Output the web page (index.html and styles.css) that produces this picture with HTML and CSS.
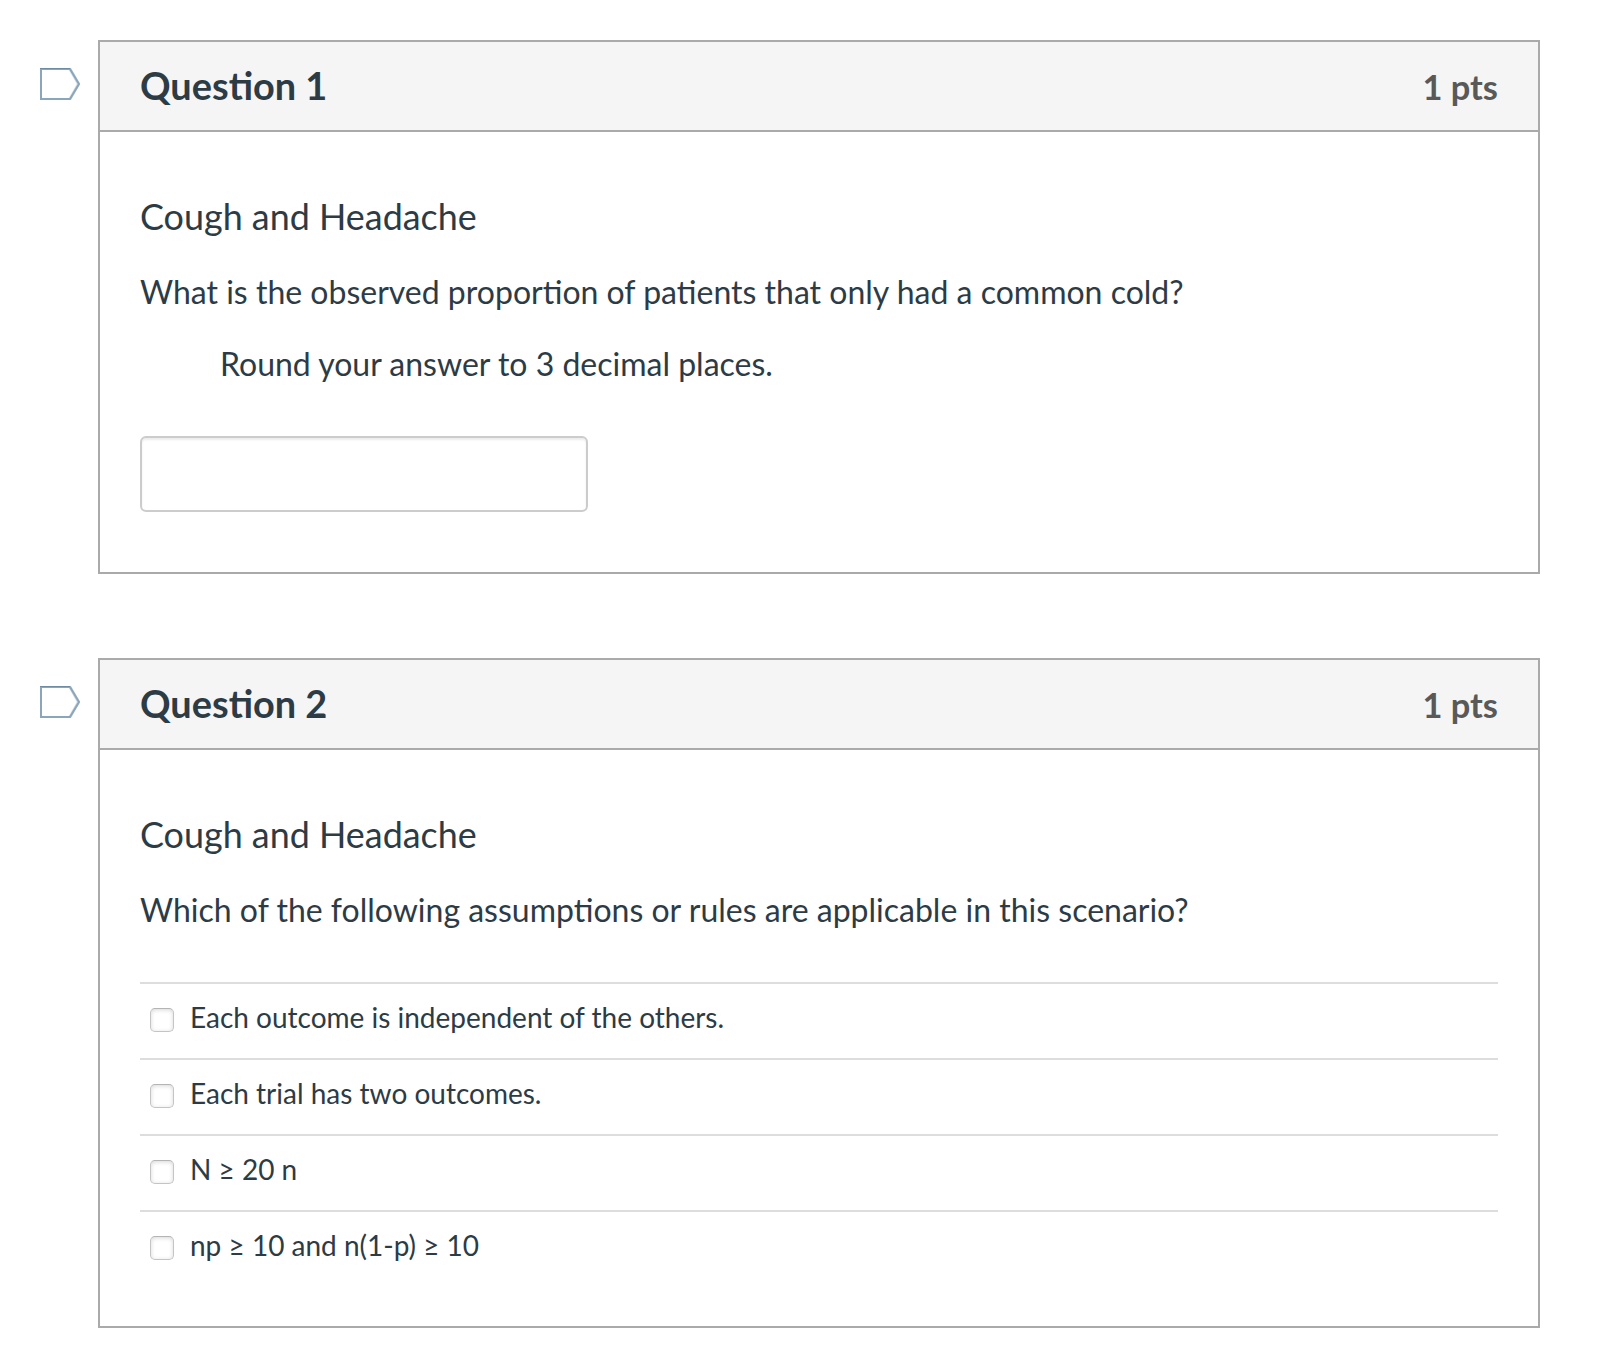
FILE: index.html
```
<!DOCTYPE html>
<html lang="en">
<head>
  <meta charset="UTF-8">
  <meta name="viewport" content="width=device-width, initial-scale=1.0">
  <title>Quiz</title>
  <link rel="stylesheet" href="styles.css">
</head>
<body>
  <div class="question_holder">
    <a href="#" class="flag" aria-label="Flag question">
      <svg width="40" height="32" viewBox="0 0 40 32"><path d="M1 1H30L39 16L30 31H1Z"/><path class="slope" d="M30 1L38.5 16L30 31"/><path class="edge" d="M0 .5H30"/></svg>
    </a>
    <div class="question">
      <div class="header">
        <h2 class="name">Question 1</h2>
        <span class="points">1 pts</span>
      </div>
      <div class="text">
        <h3>Cough and Headache</h3>
        <p>What is the observed proportion of patients that only had a common cold?</p>
        <p class="indent">Round your answer to 3 decimal places.</p>
        <input type="text" class="question_input">
      </div>
    </div>
  </div>

  <div class="question_holder">
    <a href="#" class="flag" aria-label="Flag question">
      <svg width="40" height="32" viewBox="0 0 40 32"><path d="M1 1H30L39 16L30 31H1Z"/><path class="slope" d="M30 1L38.5 16L30 31"/><path class="edge" d="M0 .5H30"/></svg>
    </a>
    <div class="question">
      <div class="header">
        <h2 class="name">Question 2</h2>
        <span class="points">1 pts</span>
      </div>
      <div class="text">
        <h3>Cough and Headache</h3>
        <p>Which of the following assumptions or rules are applicable in this scenario?</p>
        <div class="answers">
          <label class="answer"><input type="checkbox"><span>Each outcome is independent of the others.</span></label>
          <label class="answer"><input type="checkbox"><span>Each trial has two outcomes.</span></label>
          <label class="answer"><input type="checkbox"><span>N ≥ 20 n</span></label>
          <label class="answer"><input type="checkbox"><span>np ≥ 10 and n(1-p) ≥ 10</span></label>
        </div>
      </div>
    </div>
  </div>
</body>
</html>
```
FILE: styles.css
```
*{margin:0; padding:0; box-sizing:border-box;}
body{background:#fff; color:#2d3b45; font-family:Lato, "Liberation Sans", sans-serif; font-size:32px; line-height:48px; padding:40px 60px 40px 40px;}

.question_holder{display:flex; align-items:flex-start; gap:18px; margin-bottom:84px;}
.question_holder:last-child{margin-bottom:0;}

.flag{display:block; margin-top:28px; height:32px;}
.flag svg{display:block;}
.flag path{fill:#fff; stroke:#8ba6bb; stroke-width:2;}
.flag .slope{fill:none; stroke-width:3; stroke-opacity:.4;}
.flag .edge{stroke:#6d8ca3; stroke-width:1;}

.question{flex:1; border:2px solid #aaa;}
.header{display:flex; justify-content:space-between; align-items:baseline; height:90px; padding:0 40px; background:#f5f5f5; border-bottom:2px solid #aaa;}
.header .name{font-size:37.9px; line-height:88px; font-weight:bold;}
.header .points{font-size:34.4px; font-weight:bold; color:#595959;}

.text{padding:58px 40px 40px;}
.text h3{font-size:35.9px; line-height:54px; font-weight:normal; margin-bottom:24px;}
.text p{margin-bottom:24px;}
.text .indent{margin-left:80px;}

.question_input{display:block; width:448px; height:76px; margin:48px 0 20px; padding:8px 12px; border:2px solid #ccc; border-radius:6px; box-shadow:inset 0 2px 2px rgba(0,0,0,.075); font:inherit; color:inherit; outline:none;}

.answers{margin-top:48px;}
.answer{display:flex; align-items:flex-start; gap:16px; height:76px; padding:12px 10px 0; border-top:2px solid #ddd; font-size:28px; line-height:42px;}
.answer input{appearance:none; flex:none; width:24px; height:24px; margin-top:12px; background:#fff; border:1px solid #c4c4c4; border-top-color:#b4b4b4; border-radius:5px; box-shadow:inset 0 1px 4px rgba(0,0,0,.16);}
```
